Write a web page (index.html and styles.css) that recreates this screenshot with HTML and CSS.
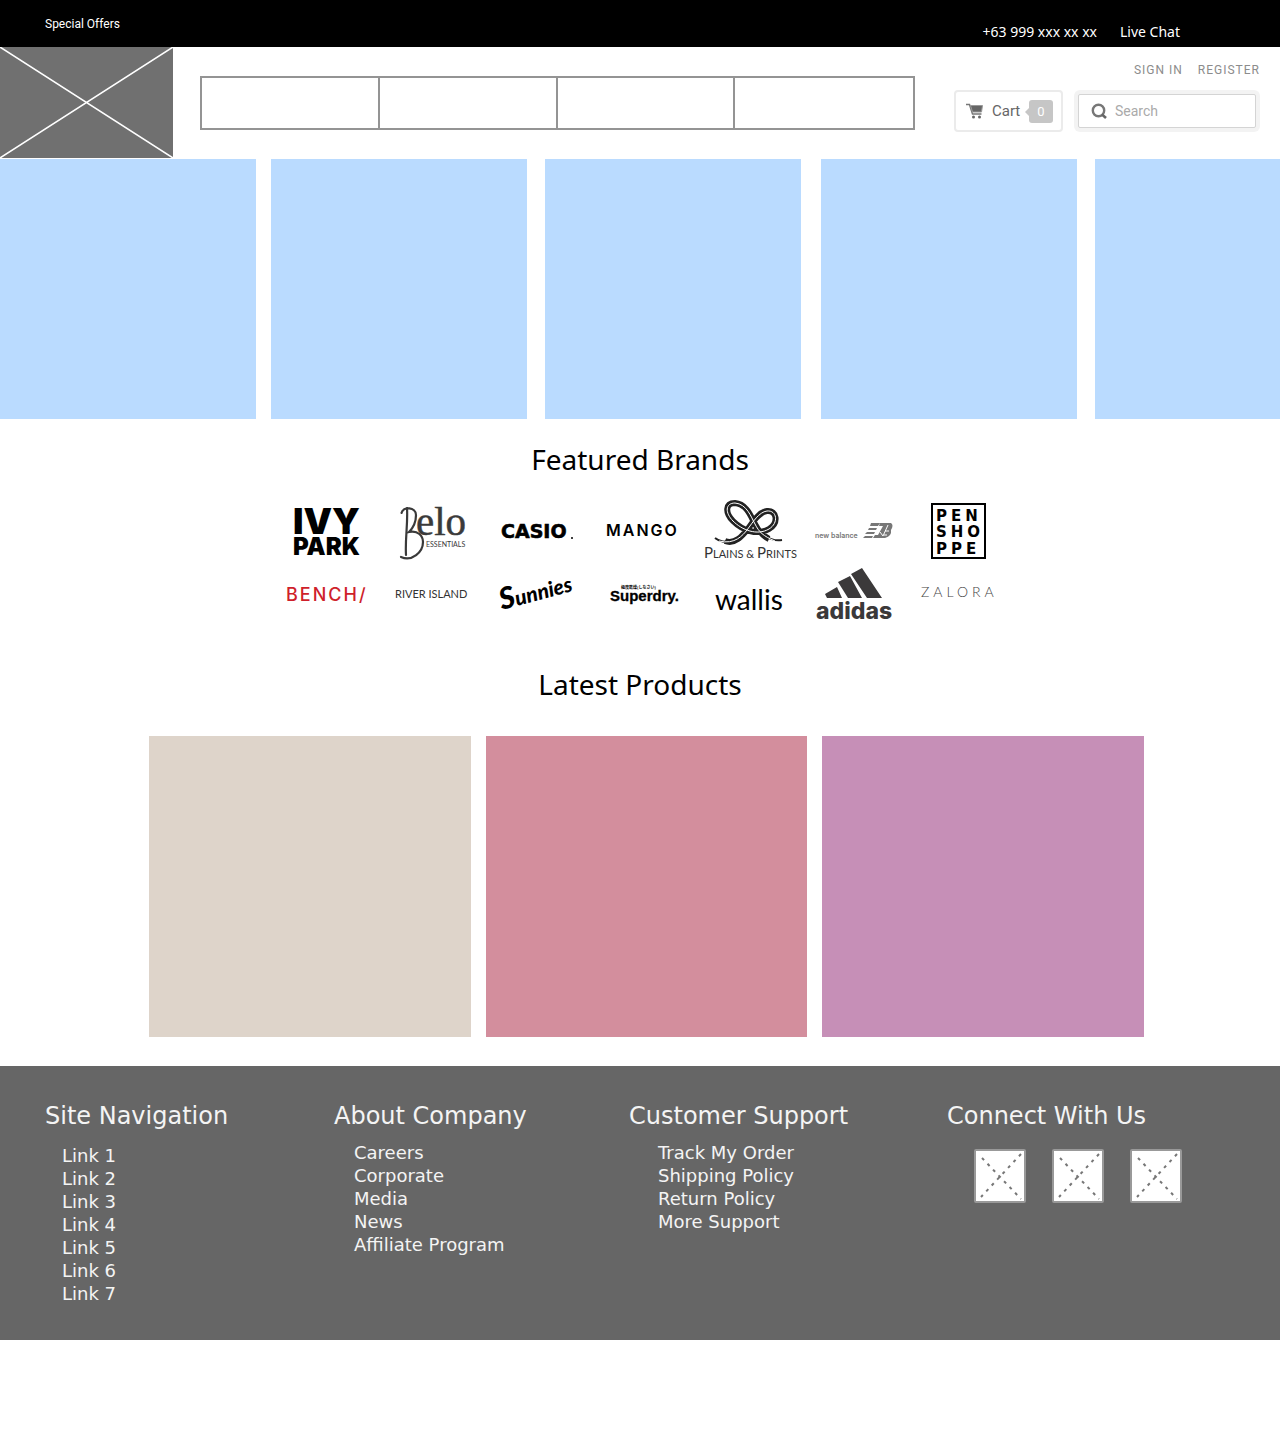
FILE: index.html
```html
<!DOCTYPE html>
<html lang="en">
<head>
<meta charset="utf-8">
<meta name="viewport" content="width=device-width, initial-scale=1">
<title>Shop</title>
<link rel="stylesheet" href="styles.css">
</head>
<body>
<div class="topbar">
  <a class="offers" href="#offers">Special Offers</a>
  <div class="contact">
    <a href="tel:+63999">+63 999 xxx xx xx</a>
    <a href="#chat">Live Chat</a>
  </div>
</div>

<header class="header">
  <a class="logo" href="#home" aria-label="Home">
    <svg viewBox="0 0 173 111" preserveAspectRatio="none" aria-hidden="true">
      <path d="M0 0L173 111M173 0L0 111" stroke="#fff" stroke-width="1.5" fill="none"/>
    </svg>
  </a>
  <nav class="menu" aria-label="Main">
    <a href="#m1" aria-label="Menu 1"></a>
    <a href="#m2" aria-label="Menu 2"></a>
    <a href="#m3" aria-label="Menu 3"></a>
    <a href="#m4" aria-label="Menu 4"></a>
  </nav>
  <div class="tools">
    <div class="account">
      <a href="#signin">SIGN IN</a>
      <a href="#register">REGISTER</a>
    </div>
    <div class="controls">
      <button class="cart" type="button">
        <svg width="18" height="16" viewBox="0 0 18 16" aria-hidden="true">
          <path d="M0 1.5H3.5L6.5 11H15.5" fill="none" stroke="#777" stroke-width="1.5"/>
          <path d="M4.5 2.5H16.500L15.500 9H6.500Z" fill="#666" stroke="#999"/>
          <circle cx="7.500" cy="14" r="1.500" fill="#666"/><circle cx="13.500" cy="14" r="1.500" fill="#666"/>
        </svg>
        <span>Cart</span>
        <span class="count">0</span>
      </button>
      <form class="search" role="search">
        <div class="field">
          <label for="q" aria-label="Search">
            <svg width="17" height="17" viewBox="0 0 17 17" aria-hidden="true">
              <circle cx="7.500" cy="7.500" r="5.700" fill="none" stroke="#777" stroke-width="2.400"/>
              <path d="M11 11.500L15 15" stroke="#666" stroke-width="2.600"/>
            </svg>
          </label>
          <input id="q" type="text" placeholder="Search">
        </div>
      </form>
    </div>
  </div>
</header>

<main>
  <section class="banners" aria-label="Banners">
    <div></div><div></div><div></div><div></div><div></div>
  </section>

  <h2 class="title">Featured Brands</h2>
  <section class="brands" aria-label="Featured brands">
    <svg viewBox="0 0 105 64">
      <text class="inter" x="18" y="35" font-size="36" font-weight="900">IVY</text>
      <text class="inter" x="18" y="56" font-size="24" font-weight="900">PARK</text>
    </svg>
    <svg viewBox="0 0 105 64" fill="#3a3a3a">
      <path d="M27 9C28 25 25 40 26 56M21.500 14C23 7 36 8 36 16C36 24 33 29 29 33C38 31 43 37 43 43C43 53 32 63 21 58" fill="none" stroke="#3a3a3a" stroke-width="2.200" stroke-linecap="round"/>
      <text class="serif" x="36" y="36" font-size="41" stroke="#3a3a3a" stroke-width=".5">elo</text>
      <text class="lato" x="46" y="48" font-size="7">ESSENTIALS</text>
    </svg>
    <svg viewBox="0 0 105 64">
      <text class="dejavu" x="16" y="39" font-size="19" font-weight="700" stroke="#000" stroke-width=".6">CASIO</text>
      <circle cx="87" cy="39" r="1"/>
    </svg>
    <svg viewBox="0 0 105 64">
      <text class="tracked inter" x="16" y="37" font-size="16" font-weight="600">MANGO</text>
    </svg>
    <svg viewBox="0 0 105 64">
      <g fill="none" stroke="#222">
        <path stroke-width="6" d="M30 42C40 46 48 36 52 31C58 23 64 13 72 12C82 11 84 24 74 30C62 37 47 31 38 22C30 14 30 4 40 4C52 5 56 18 60 25C64 33 68 37 74 40"/>
        <path stroke-width="2" d="M20 39C25 43 30 43 36 43M70 37C76 41 81 42 87 41"/>
        <path stroke="#fff" stroke-width="1" d="M24 42C40 46 48 36 52 31C58 23 64 13 72 12C82 11 84 24 74 30C62 37 47 31 38 22C30 14 30 4 40 4C52 5 56 18 60 25C64 33 68 37 80 42"/>
      </g>
      <text class="lato" x="9" y="59" font-size="11" fill="#333"><tspan font-size="15">P</tspan>LAINS &amp; <tspan font-size="15">P</tspan>RINTS</text>
    </svg>
    <svg viewBox="0 0 105 64" fill="#777">
      <text class="inter" x="15" y="39" font-size="7" font-weight="600">new balance</text>
      <path d="M71 24H80L78 27H70ZM69 29H77L76 31H68ZM67 33H75L74 35H65ZM65 37H73L72 39H63ZM80 24H91Q94 26 91 31Q92 37 85 39H73L75 36H78L83 27H79Z"/>
      <path d="M80 33L83 37L88 26M85 32H89M84 36H87" fill="none" stroke="#fff"/>
    </svg>
    <svg viewBox="0 0 105 64">
      <rect x="27" y="5" width="53" height="54" fill="none" stroke="#000" stroke-width="2"/>
      <g class="dejavu wide" font-size="15" font-weight="700">
        <text x="31" y="22">PEN</text>
        <text x="31" y="38">SHO</text>
        <text x="31" y="55">PPE</text>
      </g>
    </svg>

    <svg viewBox="0 0 105 64" fill="#cf1f2b">
      <text class="tracked inter" x="11" y="38" font-size="18" font-weight="500">BENCH/</text>
    </svg>
    <svg viewBox="0 0 105 64" fill="#333">
      <text class="lato" x="15" y="35" font-size="11">RIVER ISLAND</text>
    </svg>
    <svg viewBox="0 0 105 64">
      <text class="lato" x="17" y="47" font-size="21" font-weight="900" font-style="italic" transform="rotate(-15 17 47)"><tspan font-size="30">S</tspan>unnies</text>
    </svg>
    <svg viewBox="0 0 105 64">
      <text class="jp" x="31" y="26" font-size="4" font-weight="700">極度乾燥(しなさい)</text>
      <text class="arial" x="20" y="38" font-size="15" font-weight="700" stroke="#000" stroke-width=".3">Superdry.</text>
    </svg>
    <svg viewBox="0 0 105 64">
      <text class="lato" x="20" y="47" font-size="28">wallis</text>
    </svg>
    <svg viewBox="0 0 105 64" fill="#3b393a">
      <path d="M25 31L37 24L42 35H27ZM38 19L50 13L62 35H48ZM51 11L62 5L82 35H67Z"/>
      <text class="inter" x="16" y="56" font-size="23" font-weight="800">adidas</text>
    </svg>
    <svg viewBox="0 0 105 64" fill="#444">
      <text class="wide lato" x="16" y="34" font-size="14" font-weight="300">ZALORA</text>
    </svg>
  </section>

  <h2 class="title">Latest Products</h2>
  <section class="products" aria-label="Latest products">
    <div class="sand"></div><div class="rose"></div><div class="mauve"></div>
  </section>
</main>

<footer class="footer">
  <section>
    <h3>Site Navigation</h3>
    <ul class="sitelinks">
      <li><a href="#1">Link 1</a></li>
      <li><a href="#2">Link 2</a></li>
      <li><a href="#3">Link 3</a></li>
      <li><a href="#4">Link 4</a></li>
      <li><a href="#5">Link 5</a></li>
      <li><a href="#6">Link 6</a></li>
      <li><a href="#7">Link 7</a></li>
    </ul>
  </section>
  <section>
    <h3>About Company</h3>
    <ul class="company">
      <li><a href="#careers">Careers</a></li>
      <li><a href="#corporate">Corporate</a></li>
      <li><a href="#media">Media</a></li>
      <li><a href="#news">News</a></li>
      <li><a href="#affiliate">Affiliate Program</a></li>
    </ul>
  </section>
  <section>
    <h3>Customer Support</h3>
    <ul class="support">
      <li><a href="#track">Track My Order</a></li>
      <li><a href="#shipping">Shipping Policy</a></li>
      <li><a href="#return">Return Policy</a></li>
      <li><a href="#more">More Support</a></li>
    </ul>
  </section>
  <section>
    <h3>Connect With Us</h3>
    <div class="social">
      <a href="#s1" aria-label="Social 1"><svg viewBox="0 0 48 50"><path d="M6 7L45 48M45 3L5 46"/></svg></a>
      <a href="#s2" aria-label="Social 2"><svg viewBox="0 0 48 50"><path d="M6 7L45 48M45 3L5 46"/></svg></a>
      <a href="#s3" aria-label="Social 3"><svg viewBox="0 0 48 50"><path d="M6 7L45 48M45 3L5 46"/></svg></a>
    </div>
  </section>
</footer>
</body>
</html>
```
FILE: styles.css
```css
* { box-sizing: border-box; }
body {
  margin: 0;
  background: #fff;
  color: #000;
  font-family: "Noto Sans", sans-serif;
}
a { color: inherit; text-decoration: none; }
svg { display: block; }

.topbar {
  display: flex;
  justify-content: space-between;
  height: 47px;
  padding: 0 100px 0 45px;
  background: #000;
  color: #fff;
}
.offers {
  padding-top: 15px;
  font-family: Roboto, sans-serif;
  font-size: 12px;
  line-height: 18px;
}
.contact {
  display: flex;
  gap: 23px;
  padding-top: 23px;
  font-size: 14px;
  line-height: 18px;
}

.header { display: flex; padding-right: 20px; height: 112px; }
.logo { width: 173px; height: 111px; background: #707070; }
.logo svg { width: 100%; height: 100%; }
.menu {
  display: grid;
  grid-template-columns: repeat(4, 1fr);
  flex: 1;
  height: 54px;
  margin: 29px 39px 0 27px;
  border: 2px solid #949494;
}
.menu a:not(:last-child) { border-right: 2px solid #949494; }
.tools { width: 306px; padding-top: 14px; font-family: Roboto, sans-serif; }
.account {
  display: flex;
  justify-content: flex-end;
  gap: 15px;
  color: #8c8c8c;
  font-size: 12px;
  line-height: 18px;
  letter-spacing: 1px;
}
.controls { display: flex; gap: 11px; margin-top: 11px; }
.cart {
  display: flex;
  flex: none;
  align-items: center;
  width: 109px;
  height: 42px;
  padding: 0 8px 0 10px;
  border: 2px solid #ebebeb;
  border-radius: 4px;
  background: #fff;
  color: #666;
  font-family: inherit;
  font-size: 15px;
}
.cart svg { margin-right: 8px; }
.count {
  position: relative;
  width: 24px;
  margin-left: auto;
  border-radius: 3px;
  background: #c6c6c6;
  color: #fff;
  font-size: 13px;
  line-height: 23px;
}
.count::before {
  content: "";
  position: absolute;
  top: 7px;
  left: -4px;
  border: 5px solid transparent;
  border-left: 0;
  border-right-color: #c6c6c6;
}
.search {
  flex: 1;
  min-width: 0;
  height: 42px;
  padding: 4px;
  border-radius: 6px;
  background: #f3f3f3;
}
.field {
  display: flex;
  align-items: center;
  height: 34px;
  padding-left: 12px;
  border: 1px solid #d4d4d4;
  border-radius: 2px;
  background: #fff;
}
.search input {
  flex: 1;
  min-width: 0;
  height: 32px;
  padding: 0 7px;
  border: 0;
  background: none;
  font-family: inherit;
  font-size: 14px;
  outline: 0;
}
.search input::placeholder { color: #aaa; }

.banners {
  display: grid;
  grid-template-columns:
    minmax(0, 271fr) minmax(0, 274fr) minmax(0, 276fr)
    minmax(0, 274fr) minmax(0, 185fr);
  overflow: hidden;
}
.banners div { width: 256px; height: 260px; background: #badbff; }

.title {
  margin: 20px 0;
  font-size: 28px;
  font-weight: 400;
  line-height: 40px;
  text-align: center;
}
.brands {
  display: grid;
  grid-template-columns: repeat(7, 1fr);
  max-width: 738px;
  margin: 0 auto 37px;
  padding-left: 4px;
}
.brands svg { width: 105px; height: 64px; }
.inter { font-family: Inter, sans-serif; }
.lato { font-family: Lato, sans-serif; }
.serif { font-family: "Liberation Serif", serif; }
.dejavu { font-family: "DejaVu Sans", sans-serif; }
.arial { font-family: "Liberation Sans", sans-serif; }
.jp { font-family: "Noto Sans CJK JP", sans-serif; }
.tracked { letter-spacing: 2px; }
.wide { letter-spacing: 4px; }

.products {
  display: grid;
  grid-template-columns: repeat(3, 1fr);
  gap: 15px;
  margin: 32px 136px 29px 149px;
}
.products div { height: 301px; }
.sand { background: #ded4ca; }
.rose { background: #d38e9d; }
.mauve { background: #c68fb7; }

.footer {
  display: grid;
  grid-template-columns: 289fr 295fr 318fr 288fr;
  padding: 34px 45px 35px;
  background: #666;
  color: #f4f4f4;
  font-family: "DejaVu Sans", sans-serif;
}
.footer h3 {
  margin: 0;
  font-size: 24px;
  font-weight: 400;
  line-height: 32px;
  white-space: nowrap;
}
.footer ul {
  margin: 0;
  padding: 9px 0 0;
  font-size: 18px;
  line-height: 23px;
  list-style: none;
}
.footer .sitelinks { padding: 12px 0 0 17px; }
.footer .company { padding-left: 20px; }
.footer .support { padding-left: 29px; }
.social { display: flex; gap: 26px; padding: 17px 0 0 27px; }
.social a {
  width: 52px;
  height: 54px;
  border: 2px solid #999;
  border-radius: 2px;
  background: #fff;
}
.social svg {
  width: 100%;
  height: 100%;
  fill: none;
  stroke: #777;
  stroke-width: 2;
  stroke-dasharray: 3 5;
}
```
